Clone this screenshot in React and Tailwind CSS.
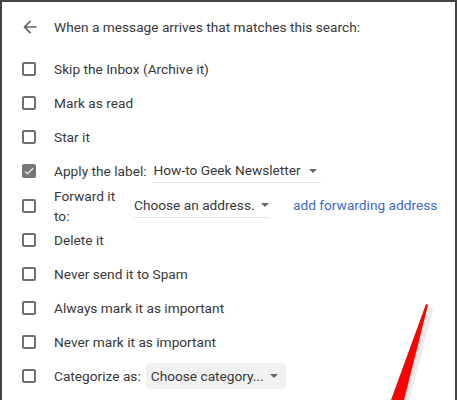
import React from "react";

const font = { fontFamily: "Roboto, 'Noto Sans', Arial, sans-serif" };

function Box({ checked }) {
  if (checked) {
    return (
      <div className="w-[14px] h-[14px] rounded-[2px] bg-[#777] flex items-center justify-center shrink-0">
        <svg width="12" height="12" viewBox="0 0 24 24">
          <path d="M9 16.2L4.8 12l-1.4 1.4L9 19 21 7l-1.4-1.4L9 16.2z" fill="#fff" />
        </svg>
      </div>
    );
  }
  return <div className="w-[14px] h-[14px] rounded-[2px] border-2 border-[#707070] shrink-0" />;
}

function Caret() {
  return (
    <svg width="8" height="4" viewBox="0 0 8 4" className="shrink-0">
      <path d="M0 0h8L4 4z" fill="#666" />
    </svg>
  );
}

function Row({ checked, children, tall }) {
  return (
    <div className={`flex items-center ${tall ? "h-[35px]" : "h-[34px]"}`}>
      <Box checked={checked} />
      <div className="ml-[18px] flex items-center text-[13.7px] text-[#383838] whitespace-nowrap">{children}</div>
    </div>
  );
}

export default function App() {
  return (
    <div style={font} className="relative w-[457px] h-[400px] bg-white border-l-2 border-t-2 border-r-2 border-[#444] overflow-hidden">
      <div className="pl-[20px]">
        <div className="mt-[8px] h-[34px] flex items-center">
          <svg width="20" height="20" viewBox="0 0 24 24" className="ml-[-2px] shrink-0">
            <path d="M20 11H7.83l5.59-5.59L12 4l-8 8 8 8 1.41-1.41L7.83 13H20v-2z" fill="#666" />
          </svg>
          <span className="ml-[14px] text-[13.7px] text-[#383838] whitespace-nowrap">When a message arrives that matches this search:</span>
        </div>
        <div className="mt-[8px]">
          <Row>Skip the Inbox (Archive it)</Row>
          <Row>Mark as read</Row>
          <Row>Star it</Row>
          <Row checked>
            <span>Apply the label:</span>
            <div className="ml-[5px] flex items-center h-[24px] border-b border-[#e6e6e6] pl-[2px] w-[169px]">
              <span>How-to Geek Newsletter</span>
              <span className="ml-[8px]"><Caret /></span>
            </div>
          </Row>
          <Row tall>
            <span className="w-[64px] leading-[20px] whitespace-normal">Forward it to:</span>
            <div className="ml-[16px] flex items-center h-[24px] border-b border-[#e6e6e6] w-[136px]">
              <span>Choose an address.</span>
              <span className="ml-[6px]"><Caret /></span>
            </div>
            <span className="ml-[23px] text-[#3f69c9]">add forwarding address</span>
          </Row>
          <Row>Delete it</Row>
          <Row>Never send it to Spam</Row>
          <Row>Always mark it as important</Row>
          <Row>Never mark it as important</Row>
          <Row>
            <span>Categorize as:</span>
            <div className="ml-[5px] flex items-center h-[26px] rounded-[4px] bg-[#f1f1f1] pl-[5px] pr-[8px]">
              <span>Choose category...</span>
              <span className="ml-[6px]"><Caret /></span>
            </div>
          </Row>
        </div>
      </div>
      <svg className="absolute left-0 top-0 pointer-events-none" width="458" height="400" viewBox="0 0 458 400">
        <polygon points="428,305 431,307 407,400 393,400" fill="#ddd" opacity="0.6" />
        <polygon points="426,304 428,305 404,400 391,400" fill="#ff0000" transform="translate(-2,-2)" />
      </svg>
    </div>
  );
}
